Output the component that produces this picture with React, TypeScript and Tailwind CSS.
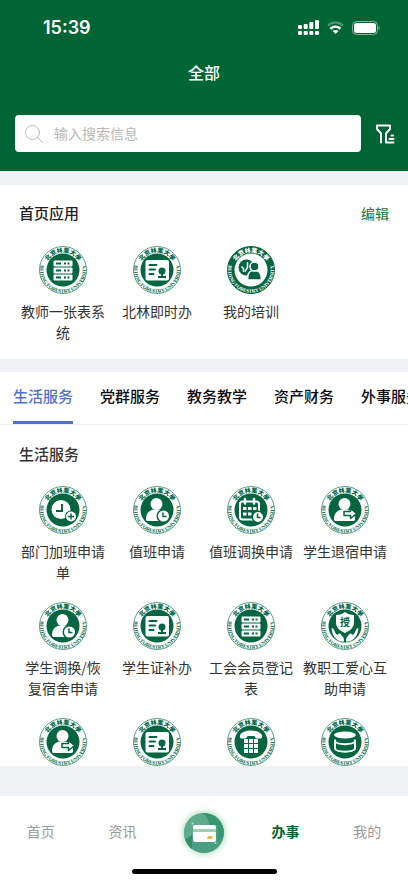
import { useId, useState } from "react";
import type { ReactNode } from "react";

const GREEN = "#046540";

/* ---------- Glyphs drawn in the middle of each seal (96 x 96 canvas) ---------- */

function ServerGlyph() {
  return (
    <g>
      {[29, 43, 57].map((y) => (
        <g key={y}>
          <rect x="29" y={y} width="38" height="12" rx="2" fill="#fff" />
          <rect x="34" y={y + 4} width="10" height="4" fill={GREEN} />
          <rect x="50" y={y + 4} width="4" height="4" fill={GREEN} />
          <rect x="57" y={y + 4} width="4" height="4" fill={GREEN} />
        </g>
      ))}
    </g>
  );
}

function CertificateGlyph() {
  return (
    <g>
      <rect x="25" y="28" width="47" height="41" rx="4" fill="#fff" />
      <g stroke={GREEN} strokeWidth="4" strokeLinecap="round">
        <path d="M33 38H47M33 47H44M33 56H41" />
      </g>
      <circle cx="58" cy="50" r="7" fill={GREEN} />
      <path d="M56 55h4v6h-4z" fill={GREEN} />
      <rect x="50" y="60" width="16" height="4" fill={GREEN} />
    </g>
  );
}

function ClockPlusGlyph() {
  return (
    <g>
      <circle cx="44" cy="47" r="19" fill="#fff" />
      <path d="M46 36V50H34" fill="none" stroke={GREEN} strokeWidth="4" />
      <circle cx="64" cy="61" r="12" fill={GREEN} />
      <circle cx="64" cy="61" r="10" fill="#fff" />
      <path d="M64 55V67M58 61H70" stroke={GREEN} strokeWidth="3" />
    </g>
  );
}

function PersonShape() {
  return (
    <g fill="#fff">
      <circle cx="47" cy="36" r="12" />
      <path d="M26 66c0-11 5-16 15-19h12c10 3 15 8 15 19c0 3-1 4-4 4H30c-3 0-4-1-4-4z" />
    </g>
  );
}

function PersonClockGlyph() {
  return (
    <g>
      <PersonShape />
      <circle cx="61" cy="60" r="14" fill={GREEN} />
      <circle cx="61" cy="60" r="11" fill="#fff" />
      <path d="M60 53V61H67" fill="none" stroke={GREEN} strokeWidth="3" />
    </g>
  );
}

function PersonExitGlyph() {
  return (
    <g>
      <PersonShape />
      <path
        d="M46 51h13v-6l12 10l-12 10v-6h-13z"
        fill="#fff"
        stroke={GREEN}
        strokeWidth="3"
        strokeLinejoin="round"
      />
    </g>
  );
}

function CalendarGlyph() {
  return (
    <g>
      <rect x="26" y="31" width="38" height="36" rx="5" fill="none" stroke="#fff" strokeWidth="4" />
      <path d="M36 26V35M54 26V35" stroke="#fff" strokeWidth="5" strokeLinecap="round" />
      <g fill="#fff">
        {[32, 42, 52].map((x) => (
          <rect key={x} x={x} y="42" width="7" height="6" />
        ))}
        {[32, 42].map((x) => (
          <rect key={x} x={x} y="53" width="7" height="6" />
        ))}
      </g>
      <circle cx="62" cy="62" r="13" fill={GREEN} />
      <circle cx="62" cy="62" r="10" fill="#fff" />
      <path d="M61 55V63H67" fill="none" stroke={GREEN} strokeWidth="3" />
    </g>
  );
}

function CareGlyph() {
  return (
    <g>
      <path
        d="M48 20c5 4 11 6 18 6v15c0 10-7 16-18 21c-11-5-18-11-18-21V26c7 0 13-2 18-6z"
        fill="#fff"
      />
      <text
        x="48"
        y="47"
        fontSize="20"
        fontWeight="700"
        textAnchor="middle"
        fill={GREEN}
        fontFamily="'Noto Sans CJK SC', sans-serif"
      >
        授
      </text>
      <g fill="#fff">
        <path d="M21 53c3-1 4 1 5 3l4 8l4 2c0-3 3-4 5-2l5 6c2 3 2 5 2 9h-6C29 76 22 66 21 53z" />
        <path d="M75 53c-3-1-4 1-5 3l-4 8l-4 2c0-3-3-4-5-2l-5 6c-2 3-2 5-2 9h6C67 76 74 66 75 53z" />
      </g>
    </g>
  );
}

function PhoneGlyph() {
  return (
    <g>
      <path
        d="M26 35c2-7 12-10 22-10s20 3 22 10c1 4-1 6-4 6h-6c-3 0-4-3-5-5H41c-1 2-2 5-5 5h-6c-3 0-5-2-4-6z"
        fill="#fff"
      />
      <g fill="#fff">
        {[42, 52, 62].map((y) =>
          [34, 44, 54].map((x) => <rect key={`${x}-${y}`} x={x} y={y} width="8" height="8" />),
        )}
      </g>
    </g>
  );
}

function DatabaseGlyph() {
  return (
    <g>
      <ellipse cx="48" cy="34" rx="22" ry="7" fill="#fff" />
      <g fill="none" stroke="#fff" strokeWidth="4" strokeLinejoin="round">
        <path d="M28 43V62c5 7 35 7 40 0V43" />
        <path d="M28 47c5 7 35 7 40 0" />
      </g>
    </g>
  );
}

function TrainingGlyph() {
  return (
    <g>
      <circle cx="39" cy="43" r="16" fill={GREEN} />
      <path d="M41 32V43L36 51M29 41l4 4v7" fill="none" stroke="#fff" strokeWidth="3" />
      <g fill={GREEN} stroke="#fff" strokeWidth="3">
        <path d="M41 68c0-12 3-18 10-19h7c7 1 11 7 11 19z" />
        <circle cx="55" cy="41" r="9" />
      </g>
    </g>
  );
}

/* ---------- University seal: ring lettering round a glyph ---------- */

const SEAL_NAME = ["北", "京", "林", "業", "大", "學"];
const SEAL_ANGLES = [-50, -30, -10, 10, 30, 50];

function Seal({ inverted = false, children }: { inverted?: boolean; children: ReactNode }) {
  const id = useId();
  const ink = inverted ? "#fff" : GREEN;
  return (
    <svg viewBox="0 0 96 96" className="size-12" aria-hidden="true">
      <circle
        cx="48"
        cy="48"
        r="47"
        fill={inverted ? GREEN : "#fff"}
        stroke={inverted ? GREEN : "#5da388"}
        strokeWidth="2"
      />
      <circle cx="48" cy="48" r="33" fill={inverted ? "#fff" : GREEN} />
      <path id={id} d="M4 34A46 46 0 1 0 92 34" fill="none" />
      <g
        fill={ink}
        fontSize="12"
        fontWeight="900"
        textAnchor="middle"
        fontFamily="'Noto Sans CJK SC', sans-serif"
      >
        {SEAL_NAME.map((char, i) => (
          <text key={char} x="48" y="13" transform={`rotate(${SEAL_ANGLES[i]} 48 48)`}>
            {char}
          </text>
        ))}
      </g>
      <text
        fill={ink}
        fontSize="10"
        fontWeight="700"
        textAnchor="middle"
        fontFamily="'Liberation Serif', serif"
      >
        <textPath href={`#${id}`} startOffset="50%">
          BEIJING FORESTRY UNIVERSITY
        </textPath>
      </text>
      {children}
    </svg>
  );
}

type App = { label?: string; name: string; glyph: ReactNode; inverted?: boolean };

function AppGrid({ apps }: { apps: App[] }) {
  return (
    <div className="grid grid-cols-4 gap-y-[19px] px-4">
      {apps.map((app, i) => (
        <button
          key={i}
          type="button"
          aria-label={app.name}
          className="flex flex-col items-center justify-start gap-[7px]"
        >
          <Seal inverted={app.inverted}>{app.glyph}</Seal>
          {app.label && (
            <span className="w-[84px] text-center text-sm leading-[21px] break-all text-[#333]">
              {app.label}
            </span>
          )}
        </button>
      ))}
    </div>
  );
}

const homeApps: App[] = [
  { label: "教师一张表系统", name: "教师一张表系统", glyph: <ServerGlyph /> },
  { label: "北林即时办", name: "北林即时办", glyph: <CertificateGlyph /> },
  { label: "我的培训", name: "我的培训", glyph: <TrainingGlyph />, inverted: true },
];

const lifeApps: App[] = [
  { label: "部门加班申请单", name: "部门加班申请单", glyph: <ClockPlusGlyph /> },
  { label: "值班申请", name: "值班申请", glyph: <PersonClockGlyph /> },
  { label: "值班调换申请", name: "值班调换申请", glyph: <CalendarGlyph /> },
  { label: "学生退宿申请", name: "学生退宿申请", glyph: <PersonExitGlyph /> },
  { label: "学生调换/恢复宿舍申请", name: "学生调换/恢复宿舍申请", glyph: <PersonClockGlyph /> },
  { label: "学生证补办", name: "学生证补办", glyph: <CertificateGlyph /> },
  { label: "工会会员登记表", name: "工会会员登记表", glyph: <ServerGlyph /> },
  { label: "教职工爱心互助申请", name: "教职工爱心互助申请", glyph: <CareGlyph /> },
  { name: "申请", glyph: <PersonExitGlyph /> },
  { name: "证件", glyph: <CertificateGlyph /> },
  { name: "电话", glyph: <PhoneGlyph /> },
  { name: "数据", glyph: <DatabaseGlyph /> },
];

const tabs = ["生活服务", "党群服务", "教务教学", "资产财务", "外事服务"];

/* ---------- Status bar ---------- */

function StatusBar() {
  return (
    <div className="flex h-[55px] items-center justify-between pr-7 pl-[43px] text-white">
      <span className="font-['Inter',sans-serif] text-lg font-semibold">15:39</span>
      <div className="flex items-center gap-2">
        <svg viewBox="0 0 21 15" className="h-[15px] w-[21px]" fill="currentColor" aria-hidden="true">
          <rect x="0" y="5" width="4" height="4" rx="1" />
          <rect x="5.7" y="4" width="4" height="5" rx="1" />
          <rect x="11.3" y="2" width="4" height="7" rx="1" />
          <rect x="17" y="0" width="4" height="9" rx="1" />
          <rect x="0" y="11" width="4" height="4" rx="1" />
          <rect x="5.7" y="11" width="4" height="4" rx="1" />
          <rect x="11.3" y="11" width="4" height="4" rx="1" />
          <rect x="17" y="11" width="4" height="4" rx="1" />
        </svg>
        <svg viewBox="0 0 17 13" className="h-[13px] w-[17px]" fill="none" aria-hidden="true">
          <path d="M1 4.6C5.2 .6 11.8 .6 16 4.6" stroke="#fff" strokeOpacity=".35" strokeWidth="2" />
          <path d="M3.5 7.8C6.500 5 10.500 5 13.500 7.800" stroke="#fff" strokeWidth="2.6" />
          <path d="M8.5 13L5.5 10.1C7.200 8.600 9.800 8.600 11.500 10.100z" fill="#fff" />
        </svg>
        <svg viewBox="0 0 28 14" className="h-[14px] w-7" fill="none" aria-hidden="true">
          <rect x=".5" y=".5" width="25" height="13" rx="4" stroke="#fff" strokeOpacity=".5" />
          <rect x="2" y="2" width="22" height="10" rx="2.5" fill="#fff" />
          <path d="M26.7 5v4c1.2-.6 1.2-3.4 0-4z" fill="#fff" fillOpacity=".6" />
        </svg>
      </div>
    </div>
  );
}

function Header() {
  return (
    <header className="bg-[#006534] pb-[19px]">
      <StatusBar />
      <h1 className="pt-[5px] text-center text-base leading-6 font-medium text-white">全部</h1>
      <form className="mt-[31px] flex items-center gap-[14px] pr-[13px] pl-[15px]">
        <label className="flex h-[37px] flex-1 items-center gap-[11px] rounded bg-white pl-[10px]">
          <svg
            viewBox="0 0 18 18"
            className="size-[18px]"
            fill="none"
            stroke="#bdbdbd"
            strokeLinecap="round"
            aria-hidden="true"
          >
            <circle cx="7.5" cy="7.5" r="7" />
            <path d="M12.5 12.5L17.5 17.5" />
          </svg>
          <input
            type="search"
            aria-label="搜索"
            placeholder="输入搜索信息"
            className="min-w-0 flex-1 bg-transparent pb-0.5 text-sm text-[#333] outline-none placeholder:text-[#b8b8b8]"
          />
        </label>
        <button type="button" aria-label="筛选">
          <svg
            viewBox="0 0 20 20"
            className="size-5"
            fill="none"
            stroke="#fff"
            strokeWidth="2"
            strokeLinejoin="round"
            strokeLinecap="round"
            aria-hidden="true"
          >
            <path d="M6 18.500V9.500L2 5V1.500H15V5L11 9.500V18.500H18.500" />
            <path d="M16.500 11.500H18M14.500 15H18.500" />
          </svg>
        </button>
      </form>
    </header>
  );
}

function CardIcon() {
  const id = useId();
  return (
    <svg viewBox="0 0 40 40" className="size-10" aria-hidden="true">
      <clipPath id={id}>
        <circle cx="20" cy="20" r="20" />
      </clipPath>
      <g clipPath={`url(#${id})`}>
        <rect width="40" height="40" fill="#4a9d80" />
        <path d="M0 0H21c4 3 5 8 4 12L8 24L0 28z" fill="#5fab8f" />
        <path d="M18 0h22v22L34 30V12H25c0-5-2-9-7-12z" fill="#369873" />
        <path d="M0 27l8-5v18H0z" fill="#2f8f6a" />
      </g>
      <rect x="9" y="12" width="23" height="17" rx="2" fill="#fff" />
      <rect x="9" y="16" width="23" height="3" fill="#9fceb4" />
      <path d="M24.500 23.500H28L27.500 25.500H23.500z" fill="#f5b53d" stroke="#f5b53d" strokeLinejoin="round" />
      <circle cx="8.5" cy="10.500" r="1" fill="#a9dcc2" />
      <circle cx="31.5" cy="30" r="1" fill="#a9dcc2" />
    </svg>
  );
}

function BottomNav() {
  const link = "pb-[3px]";
  return (
    <nav className="mt-auto bg-white pb-[9px] text-sm text-[#9a9a9a]">
      <div className="grid h-[73px] grid-cols-5 place-items-center">
        <a href="#home" className={link}>
          首页
        </a>
        <a href="#news" className={link}>
          资讯
        </a>
        <a
          href="#card"
          aria-label="校园卡"
          className="rounded-full shadow-[0_0_6px_1px_rgba(110,190,130,0.6)]"
        >
          <CardIcon />
        </a>
        <a href="#services" aria-current="page" className="pb-[3px] font-bold text-[#0b6335]">
          办事
        </a>
        <a href="#me" className={link}>
          我的
        </a>
      </div>
      <div className="mx-auto h-[5px] w-[145px] rounded-full bg-black" />
    </nav>
  );
}

export default function App() {
  const [active, setActive] = useState(tabs[0]);
  return (
    <div className="flex min-h-screen flex-col overflow-hidden bg-[#eff1f4] font-['Noto_Sans_CJK_SC',sans-serif]">
      <Header />

      <section className="mt-[14px] bg-white pt-4 pb-4">
        <div className="flex items-center justify-between px-[19px]">
          <h2 className="text-[15px] leading-6 font-medium text-[#222]">首页应用</h2>
          <button type="button" className="text-sm leading-6 text-[#1b7340]">
            编辑
          </button>
        </div>
        <div className="mt-[21px]">
          <AppGrid apps={homeApps} />
        </div>
      </section>

      <section className="mt-[13px] bg-white">
        <div role="tablist" className="flex gap-[27px] overflow-hidden border-b border-[#f0f1f3] pl-[13px]">
          {tabs.map((tab) => (
            <button
              key={tab}
              type="button"
              role="tab"
              aria-selected={tab === active}
              onClick={() => setActive(tab)}
              className={
                tab === active
                  ? "h-[52px] shrink-0 border-b-3 border-[#4d73cc] text-[15px] font-medium text-[#4d73cc]"
                  : "h-[52px] shrink-0 border-b-3 border-transparent text-[15px] font-medium text-[#0c0c14]"
              }
            >
              {tab}
            </button>
          ))}
        </div>
        <h2 className="px-[19px] pt-[17px] text-[15px] leading-6 font-medium text-[#333]">生活服务</h2>
        <div className="mt-5">
          <AppGrid apps={lifeApps} />
        </div>
      </section>

      <BottomNav />
    </div>
  );
}
